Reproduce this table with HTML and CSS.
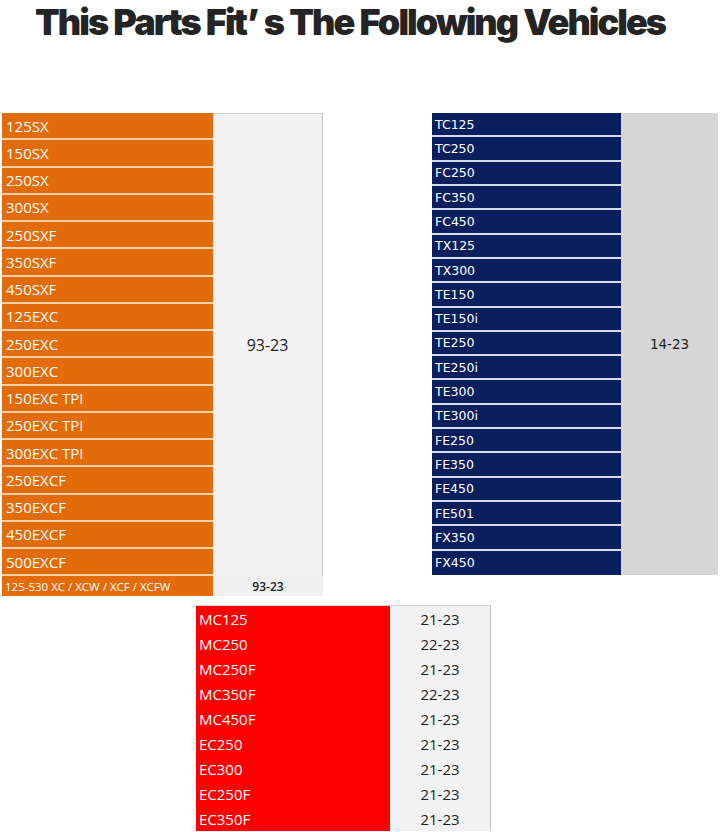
FILE: index.html
```html
<!DOCTYPE html>
<html>
<head>
<meta charset="utf-8">
<link rel="stylesheet" href="styles.css">
</head>
<body>
<h1 class="title">This Parts Fit’ s The Following Vehicles</h1>
<div class="top-row">
  <div class="tbl ktm">
    <div class="name">125SX</div>
    <div class="years span">93-23</div>
    <div class="name">150SX</div>
    <div class="name">250SX</div>
    <div class="name">300SX</div>
    <div class="name">250SXF</div>
    <div class="name">350SXF</div>
    <div class="name">450SXF</div>
    <div class="name">125EXC</div>
    <div class="name">250EXC</div>
    <div class="name">300EXC</div>
    <div class="name">150EXC TPI</div>
    <div class="name">250EXC TPI</div>
    <div class="name">300EXC TPI</div>
    <div class="name">250EXCF</div>
    <div class="name">350EXCF</div>
    <div class="name">450EXCF</div>
    <div class="name">500EXCF</div>
    <div class="name small">125-530 XC / XCW / XCF / XCFW</div>
    <div class="years last">93-23</div>
  </div>
  <div class="tbl husq">
    <div class="name">TC125</div>
    <div class="years span">14-23</div>
    <div class="name">TC250</div>
    <div class="name">FC250</div>
    <div class="name">FC350</div>
    <div class="name">FC450</div>
    <div class="name">TX125</div>
    <div class="name">TX300</div>
    <div class="name">TE150</div>
    <div class="name">TE150i</div>
    <div class="name">TE250</div>
    <div class="name">TE250i</div>
    <div class="name">TE300</div>
    <div class="name">TE300i</div>
    <div class="name">FE250</div>
    <div class="name">FE350</div>
    <div class="name">FE450</div>
    <div class="name">FE501</div>
    <div class="name">FX350</div>
    <div class="name">FX450</div>
  </div>
</div>
<div class="tbl gasgas">
  <div class="name">MC125</div><div class="years">21-23</div>
  <div class="name">MC250</div><div class="years">22-23</div>
  <div class="name">MC250F</div><div class="years">21-23</div>
  <div class="name">MC350F</div><div class="years">22-23</div>
  <div class="name">MC450F</div><div class="years">21-23</div>
  <div class="name">EC250</div><div class="years">21-23</div>
  <div class="name">EC300</div><div class="years">21-23</div>
  <div class="name">EC250F</div><div class="years">21-23</div>
  <div class="name">EC350F</div><div class="years">21-23</div>
</div>
</body>
</html>
```
FILE: styles.css
```css
html, body {
  margin: 0;
  padding: 0;
  background: #ffffff;
}
body {
  width: 720px;
  height: 832px;
  overflow: hidden;
  font-family: "Open Sans", "Liberation Sans", sans-serif;
}
.title {
  margin: 0;
  height: 113px;
  padding-left: 35px;
  font-family: Inter, "Liberation Sans", sans-serif;
  font-weight: 900;
  font-size: 36px;
  letter-spacing: -1.95px;
  word-spacing: 1px;
  line-height: normal;
  color: #242424;
  box-sizing: border-box;
  white-space: nowrap;
}
.top-row {
  display: flex;
  justify-content: space-between;
  align-items: flex-start;
  padding-left: 2px;
  padding-right: 2px;
}
.tbl {
  display: grid;
  box-sizing: border-box;
}
.tbl .name {
  box-sizing: border-box;
  color: #ffffff;
  display: flex;
  align-items: center;
  white-space: nowrap;
}
.tbl .years {
  display: flex;
  align-items: center;
  justify-content: center;
  color: #1e1e1e;
  font-family: "Open Sans", "Liberation Sans", sans-serif;
  font-size: 13px;
}
.years.span {
  grid-column: 2;
}

/* KTM orange table */
.ktm {
  grid-template-columns: 211px 110px;
  grid-template-rows: repeat(17, 27.25px) 20px;
}
.ktm .name {
  background: #e36c0a;
  border-bottom: 2px solid #f7cfa8;
  padding-left: 4px;
  font-size: 15px;
  font-weight: 500;
  font-family: "Open Sans", "Liberation Sans", sans-serif;
}
.ktm .name.small {
  border-bottom: none;
  font-size: 11.5px;
  font-weight: 400;
  padding-left: 3px;
}
.ktm .years.span {
  grid-row: 1 / span 17;
  background: #f2f2f2;
  border-top: 1px solid #d0d0d0;
  border-right: 1px solid #c4c4c4;
  font-size: 16px;
}
.ktm .years.last {
  background: #f0f0f0;
  font-size: 12px;
  font-weight: 600;
}

/* Husqvarna blue table */
.husq {
  grid-template-columns: 189px 97px;
  grid-template-rows: repeat(19, 24.32px);
}
.husq .name {
  background: #0b1f5e;
  border-bottom: 2px solid #d8dcea;
  padding-left: 3px;
  font-family: "DejaVu Sans", Verdana, sans-serif;
  font-size: 12.5px;
}
.husq .name:last-child {
  border-bottom: none;
}
.husq .years.span {
  grid-row: 1 / span 19;
  background: #d6d6d6;
  font-family: "DejaVu Sans", Verdana, sans-serif;
  font-size: 13.5px;
}

/* GasGas red table */
.gasgas {
  margin-top: 9px;
  margin-left: 196px;
  width: 295px;
  grid-template-columns: 194px 101px;
  grid-template-rows: repeat(9, 25px);
  border-top: 1px solid #cfcfcf;
}
.gasgas .name {
  background: #ff0000;
  padding-left: 3px;
  font-size: 15px;
}
.gasgas .years {
  background: #f2f2f2;
  border-right: 1px solid #bdbdbd;
  font-size: 15px;
}
```
